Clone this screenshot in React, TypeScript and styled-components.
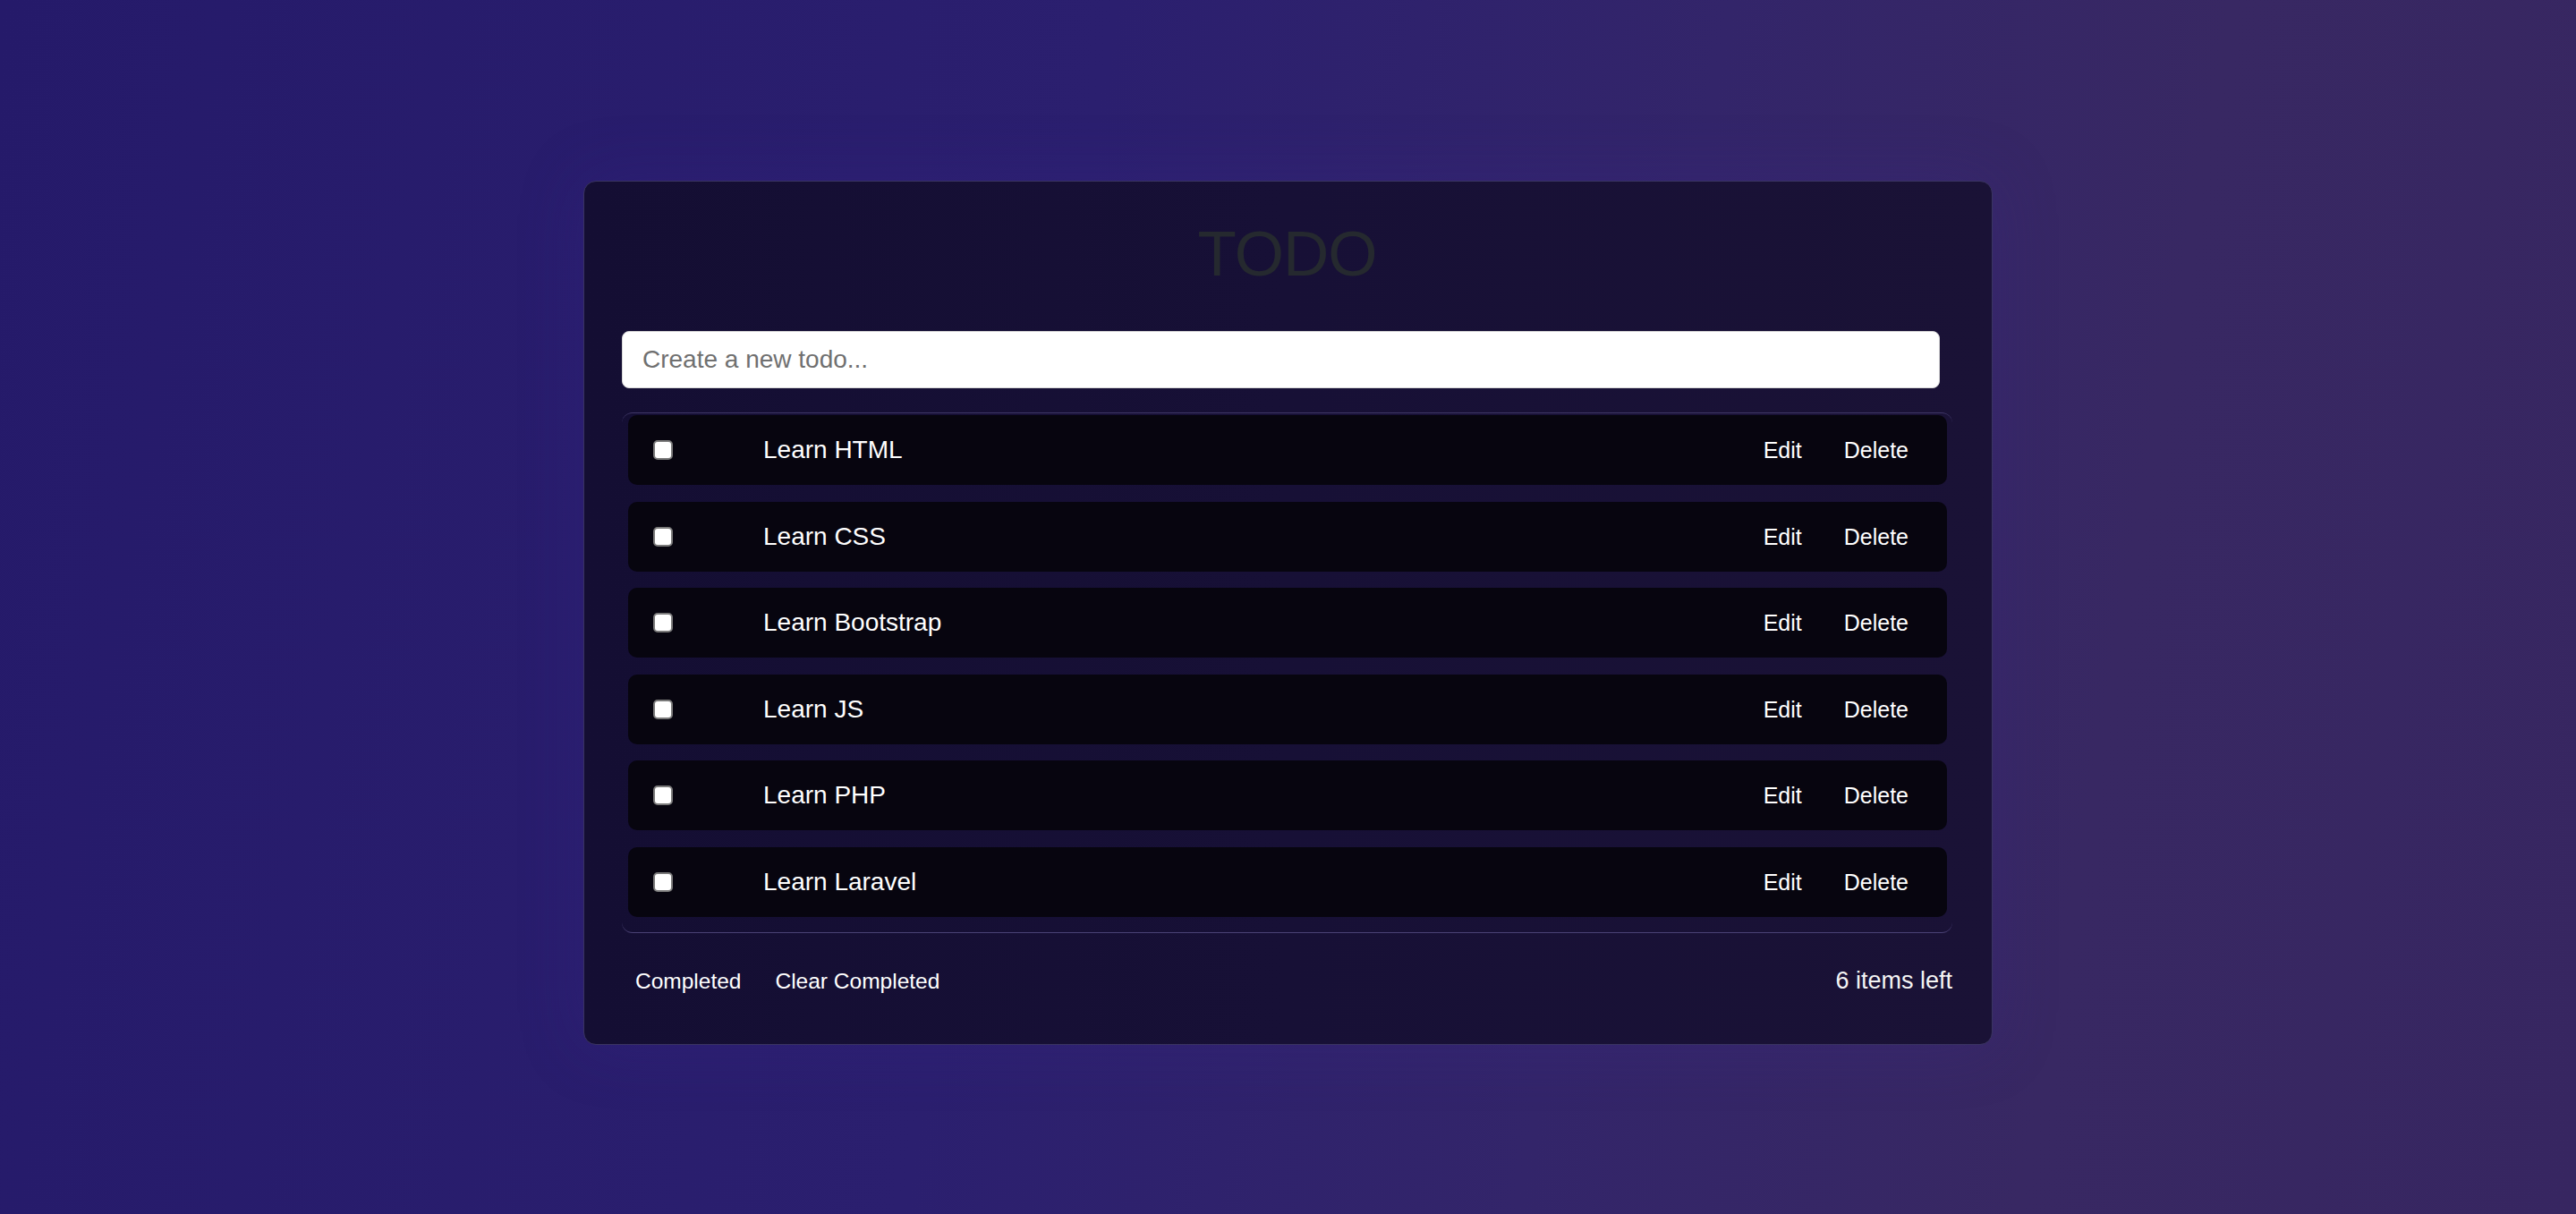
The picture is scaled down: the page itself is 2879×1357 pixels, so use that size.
import React, { FC, useState } from "react";
import styled, { createGlobalStyle } from "styled-components";

type Todo = {
  id: number;
  title: string;
  done: boolean;
};

const initialTodos: Todo[] = [
  { id: 1, title: "Learn HTML", done: false },
  { id: 2, title: "Learn CSS", done: false },
  { id: 3, title: "Learn Bootstrap", done: false },
  { id: 4, title: "Learn JS", done: false },
  { id: 5, title: "Learn PHP", done: false },
  { id: 6, title: "Learn Laravel", done: false }
];

const GlobalStyle = createGlobalStyle`
  html, body {
    margin: 0;
    padding: 0;
  }
  body {
    font-family: "Liberation Sans", Arial, sans-serif;
    background: linear-gradient(100deg, #251a6a 0%, #2b1f6f 40%, #33256a 62%, #382863 80%, #372661 100%);
    min-height: 100vh;
  }
`;

const Page = styled.div`
  min-height: 1357px;
  display: flex;
  justify-content: center;
  align-items: flex-start;
  padding-top: 202px;
  box-sizing: border-box;
`;

const Card = styled.div`
  width: 1575px;
  box-sizing: border-box;
  padding: 42px 44px 50px 42px;
  background: linear-gradient(90deg, #140e33 0%, #171036 50%, #1a1236 100%);
  border: 1px solid #3a3461;
  border-radius: 14px;
  box-shadow: 0 0 70px rgba(60, 40, 140, 0.25);
`;

const Title = styled.h1`
  margin: 0 0 47px;
  text-align: center;
  font-size: 71px;
  font-weight: 400;
  letter-spacing: -1px;
  line-height: 78px;
  color: #25292f;
`;

const NewTodo = styled.input`
  display: block;
  width: calc(100% - 14px);
  height: 64px;
  box-sizing: border-box;
  padding: 0 22px;
  border: 1px solid #d8d8d8;
  border-radius: 8px;
  background: #ffffff;
  font-family: "Liberation Sans", Arial, sans-serif;
  font-size: 28px;
  color: #222;
  outline: none;

  &::placeholder {
    color: #707070;
  }
`;

const List = styled.ul`
  list-style: none;
  margin: 27px 0 0;
  padding: 2px 6px 17px 7px;
  display: flex;
  flex-direction: column;
  gap: 18.6px;
  border-top: 1px solid #3f3766;
  border-bottom: 1px solid #4a4275;
  border-radius: 12px;
`;

const Row = styled.li<{ $done: boolean }>`
  height: 78px;
  display: flex;
  align-items: center;
  padding: 0 28px;
  background: #07050f;
  border-radius: 10px;
  color: ${p => (p.$done ? "#8a86a0" : "#ffffff")};
`;

const Check = styled.input`
  appearance: none;
  margin: 0;
  width: 22px;
  height: 22px;
  flex: none;
  background: #ffffff;
  border: 2px solid #7a7a7a;
  border-radius: 5px;
  box-sizing: border-box;
  cursor: pointer;

  &:checked {
    background: #0075ff;
    border-color: #0075ff;
  }
`;

const Label = styled.span<{ $done: boolean }>`
  flex: 1;
  margin-left: 101px;
  font-size: 28px;
  text-decoration: ${p => (p.$done ? "line-through" : "none")};
`;

const Actions = styled.div`
  display: flex;
  gap: 17px;
`;

const TextButton = styled.button<{ $size?: number }>`
  background: transparent;
  border: none;
  padding: 0 15px;
  color: #ffffff;
  font-family: "Liberation Sans", Arial, sans-serif;
  font-size: ${p => p.$size ?? 25}px;
  line-height: 40px;
  cursor: pointer;
`;

const Footer = styled.div`
  margin-top: 34px;
  height: 40px;
  display: flex;
  align-items: center;
  justify-content: space-between;
`;

const FooterButtons = styled.div`
  display: flex;
  gap: 8px;
`;

const Count = styled.span`
  font-size: 27px;
  color: #f4f4f4;
`;

const App: FC = () => {
  const [todos, setTodos] = useState<Todo[]>(initialTodos);
  const [text, setText] = useState("");

  const toggle = (id: number) =>
    setTodos(list => list.map(t => (t.id === id ? { ...t, done: !t.done } : t)));

  const remove = (id: number) => setTodos(list => list.filter(t => t.id !== id));

  const edit = (id: number) => {
    const todo = todos.find(t => t.id === id);
    if (todo) {
      setText(todo.title);
    }
  };

  const add = (e: React.KeyboardEvent<HTMLInputElement>) => {
    if (e.key === "Enter" && text.trim()) {
      setTodos(list => [...list, { id: Date.now(), title: text.trim(), done: false }]);
      setText("");
    }
  };

  const left = todos.filter(t => !t.done).length;

  return (
    <>
      <GlobalStyle />
      <Page>
        <Card>
          <Title>TODO</Title>
          <NewTodo
            placeholder="Create a new todo..."
            value={text}
            onChange={e => setText(e.target.value)}
            onKeyDown={add}
          />
          <List>
            {todos.map(todo => (
              <Row key={todo.id} $done={todo.done}>
                <Check type="checkbox" checked={todo.done} onChange={() => toggle(todo.id)} />
                <Label $done={todo.done}>{todo.title}</Label>
                <Actions>
                  <TextButton onClick={() => edit(todo.id)}>Edit</TextButton>
                  <TextButton onClick={() => remove(todo.id)}>Delete</TextButton>
                </Actions>
              </Row>
            ))}
          </List>
          <Footer>
            <FooterButtons>
              <TextButton $size={24.5}>Completed</TextButton>
              <TextButton $size={24.5} onClick={() => setTodos(list => list.filter(t => !t.done))}>
                Clear Completed
              </TextButton>
            </FooterButtons>
            <Count>{left} items left</Count>
          </Footer>
        </Card>
      </Page>
    </>
  );
};

export default App;
